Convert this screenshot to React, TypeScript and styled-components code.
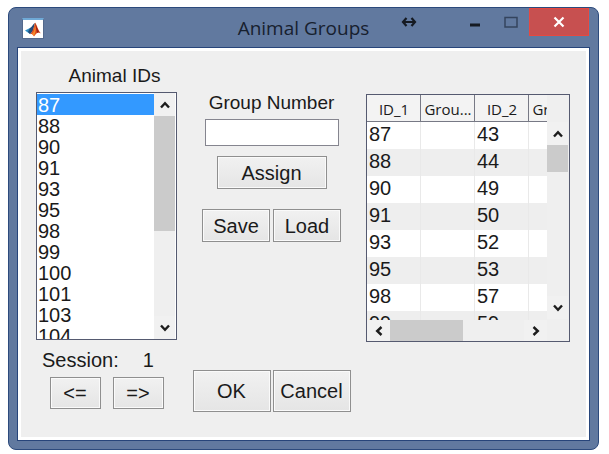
import React, { useRef, useState } from "react";
import styled, { createGlobalStyle } from "styled-components";

const listIds = [87, 88, 90, 91, 93, 95, 98, 99, 100, 101, 103, 104, 105, 107, 108, 110, 112, 113];
const rows = [[87, 43], [88, 44], [90, 49], [91, 50], [93, 52], [95, 53], [98, 57], [99, 59], [100, 60], [101, 62]];

const GlobalStyle = createGlobalStyle`
  * { box-sizing: border-box; }
  body { margin: 0; background: #fff; }
  body, button, input, select { font: 20px/24px "Liberation Sans", Arial, sans-serif; color: #1a1a1a; }
`;

const Page = styled.div`
  display: flex;
  min-height: 100vh;
  padding: 7px 10px 4px 8px;
`;

const Window = styled.main`
  flex: 1;
  min-width: 0;
  display: flex;
  flex-direction: column;
  padding: 0 9px 9px;
  background: #61799f;
  border: 1px solid #2c4a7c;
  border-radius: 8px;
  overflow: hidden;
`;

const TitleBar = styled.header`
  display: grid;
  grid-template-columns: 1fr auto 1fr;
  align-items: center;
  height: 40px;
`;

const Logo = styled.span`
  display: flex;
  width: 22px;
  height: 21px;
  margin-left: 4px;
  background: #fff;
  border: 1px solid #54698c;
  border-top: 2px solid #6fa9d6;
`;

const Title = styled.h1`
  margin: 0;
  font: 19px/24px "Open Sans", sans-serif;
  color: #17202e;
`;

const Controls = styled.div`
  display: flex;
  align-self: start;
  justify-content: flex-end;
`;

const ControlButton = styled.button<{ $close?: boolean }>`
  display: flex;
  align-items: center;
  justify-content: center;
  width: ${(p) => (p.$close ? 60 : 36)}px;
  height: 28px;
  padding: 0;
  border: ${(p) => (p.$close ? "1px solid #e8483f" : "0")};
  background: ${(p) => (p.$close ? "#c75050" : "transparent")};
`;

const ResizeMark = styled.span`
  display: flex;
  align-items: center;
  height: 28px;
  margin-right: 40px;
`;

const Panel = styled.form`
  flex: 1;
  display: grid;
  grid-template-columns: 141fr 157fr 204fr;
  column-gap: 16px;
  align-items: start;
  padding: 13px 16px 24px 15px;
  background: #efefef;
  border: 3px solid #fff;
  outline: 1px solid #27457a;
`;

const Column = styled.section<{ $top: number }>`
  min-width: 0;
  display: flex;
  flex-direction: column;
  align-items: center;
  padding-top: ${(p) => p.$top}px;
`;

const Label = styled.label<{ $indent?: number }>`
  font-size: 19px;
  white-space: nowrap;
  margin-bottom: 4px;
  padding-left: ${(p) => p.$indent ?? 0}px;
`;

const ListFrame = styled.div`
  display: flex;
  align-self: stretch;
  height: 248px;
  border: 1px solid #555a70;
  background: #fff;
  padding-right: 1px;
`;

const List = styled.select`
  flex: 1;
  min-width: 0;
  height: 100%;
  padding: 1px 0 0;
  border: 0;
  border-radius: 0;
  outline: 0;
  background: #fff;
  overflow-y: scroll;
  scrollbar-width: none;

  option {
    height: 21px;
    min-height: 21px;
    padding: 0 0 0 1px;
    font: 20px/21px "Liberation Sans", Arial, sans-serif;
    color: #1a1a1a;
  }
  option:checked {
    background: #3399ff linear-gradient(#3399ff, #3399ff);
    color: #fff;
  }
`;

const ScrollBar = styled.div<{ $horizontal?: boolean }>`
  flex: none;
  display: flex;
  flex-direction: ${(p) => (p.$horizontal ? "row" : "column")};
  ${(p) => (p.$horizontal ? "height: 21px;" : "width: 21px;")}
  background: #efefef;
`;

const ScrollButton = styled.button`
  flex: 0 0 23px;
  display: flex;
  align-items: center;
  justify-content: center;
  padding: 0;
  border: 0;
  background: #f1f1f1;
`;

const Track = styled.div<{ $horizontal?: boolean }>`
  flex: 1;
  display: flex;
  flex-direction: ${(p) => (p.$horizontal ? "row" : "column")};
`;

const Thumb = styled.div<{ $length: number }>`
  flex: 0 0 ${(p) => p.$length}px;
  background: #cbcbcb;
`;

const Button = styled.button<{ $width: number; $height: number }>`
  width: ${(p) => p.$width}px;
  height: ${(p) => p.$height}px;
  padding: 0;
  border: 1px solid #8f8f8f;
  box-shadow: inset 0 0 0 1px #fafafa;
  background: linear-gradient(#f1f1f1, #e5e5e5);
  white-space: nowrap;
`;

const ButtonRow = styled.div<{ $gap: number; $top: number }>`
  display: flex;
  gap: ${(p) => p.$gap}px;
  margin-top: ${(p) => p.$top}px;
`;

const Session = styled.div`
  display: flex;
  align-self: stretch;
  gap: 24px;
  margin-top: 8px;
  padding-left: 6px;
`;

const NumberInput = styled.input`
  width: 134px;
  height: 27px;
  padding: 0 4px;
  border: 1px solid #85858f;
  background: #fff;
`;

const TableFrame = styled.div`
  align-self: stretch;
  display: flex;
  height: 248px;
  border: 1px solid #555a70;
`;

const TableArea = styled.div`
  flex: 1;
  min-width: 0;
  display: flex;
  flex-direction: column;
`;

const TableClip = styled.div`
  flex: 1;
  min-height: 0;
  overflow: hidden;
`;

const SideBar = styled.div`
  display: flex;
  padding: 27px 1px 22px 0;
`;

const Table = styled.table`
  table-layout: fixed;
  width: 216px;
  border-collapse: separate;
  border-spacing: 0;

  th {
    width: 54px;
    height: 27px;
    padding: 1px 0 0 1px;
    border-right: 1px solid #777985;
    border-bottom: 1px solid #777985;
    background: #f3f3f3;
    font: 15px/20px "Open Sans", sans-serif;
  }
  td {
    height: 27px;
    padding: 0 0 4px 2px;
    line-height: 22px;
    border-right: 1px solid #e9e9e9;
    background: #fff;
  }
  tr:nth-child(even) td { background: #eeeeee; }
`;

const turns = { up: 0, right: 90, down: 180, left: 270 };

function Chevron({ to }: { to: keyof typeof turns }) {
  return (
    <svg width="12" height="12" viewBox="0 0 12 12" aria-hidden="true">
      <path d="M2 8.500 6 4.200 10 8.500" transform={`rotate(${turns[to]} 6 6)`} fill="none" stroke="#1d1d1d" strokeWidth="2.400" />
    </svg>
  );
}

type ScrollProps = { name: string; thumb: number; horizontal?: boolean; onStep: (amount: number) => void };

function Scroller({ name, thumb, horizontal, onStep }: ScrollProps) {
  return (
    <ScrollBar $horizontal={horizontal}>
      <ScrollButton type="button" aria-label={`${name} back`} onClick={() => onStep(-27)}>
        <Chevron to={horizontal ? "left" : "up"} />
      </ScrollButton>
      <Track $horizontal={horizontal}>
        <Thumb $length={thumb} />
      </Track>
      <ScrollButton type="button" aria-label={`${name} forward`} onClick={() => onStep(27)}>
        <Chevron to={horizontal ? "right" : "down"} />
      </ScrollButton>
    </ScrollBar>
  );
}

export default function App() {
  const list = useRef<HTMLSelectElement>(null);
  const table = useRef<HTMLDivElement>(null);
  const [session, setSession] = useState(1);
  const [group, setGroup] = useState("");

  return (
    <Page>
      <GlobalStyle />
      <Window>
        <TitleBar>
          <Logo>
            <svg width="20" height="18" viewBox="0 0 20 18" aria-hidden="true">
              <path d="M2 10.500 7 8l3 2.500L7 14z" fill="#2f8fc4" />
              <path d="M7 8c2-1 3-4 5-5l-2 8-3 3-2-2z" fill="#254b78" />
              <path d="M12 2.500c2 2 3 8 6 11-3-2-4-1-7 3-1-2-2-3-4-2 3-3 4-8 5-12z" fill="#df4e20" />
              <path d="M12 3c0 5-1 9-3 11l2 2c2-4 2-9 1-13z" fill="#f68a2a" />
              <path d="M12 3c2 4 3 8 5 10-1-1-2-1-3 0z" fill="#9c2118" />
            </svg>
          </Logo>
          <Title>Animal Groups</Title>
          <Controls>
            <ResizeMark>
              <svg width="16" height="12" viewBox="0 0 16 12" aria-hidden="true">
                <path d="M2 6h12M5.500 2 2 6l3.500 4M10.500 2 14 6l-3.500 4" fill="none" stroke="#151a22" strokeWidth="2.200" />
              </svg>
            </ResizeMark>
            <ControlButton aria-label="Minimize">
              <svg width="12" height="12" viewBox="0 0 12 12" aria-hidden="true">
                <path d="M1 9h10" stroke="#151a22" strokeWidth="3" />
              </svg>
            </ControlButton>
            <ControlButton aria-label="Maximize">
              <svg width="14" height="12" viewBox="0 0 14 12" aria-hidden="true">
                <path d="M1 1.500h12v9.500H1z" fill="none" stroke="#34445e" strokeWidth="1.500" />
              </svg>
            </ControlButton>
            <ControlButton $close aria-label="Close">
              <svg width="12" height="12" viewBox="0 0 12 12" aria-hidden="true">
                <path d="m1.500 1.500 9 9m0-9-9 9" stroke="#fff" strokeWidth="2.200" />
              </svg>
            </ControlButton>
          </Controls>
        </TitleBar>
        <Panel onSubmit={(e) => e.preventDefault()}>
          <Column $top={0}>
            <Label htmlFor="animal-ids" $indent={16}>Animal IDs</Label>
            <ListFrame>
              <List id="animal-ids" ref={list} size={11} defaultValue="87">
                {listIds.map((id) => (
                  <option key={id} value={id}>{id}</option>
                ))}
              </List>
              <Scroller name="Scroll list" thumb={115} onStep={(top) => list.current?.scrollBy({ top })} />
            </ListFrame>
            <Session>
              <span>Session:</span>
              <output>{session}</output>
            </Session>
            <ButtonRow $gap={12} $top={5}>
              <Button type="button" $width={51} $height={32} onClick={() => setSession(Math.max(1, session - 1))}>&lt;=</Button>
              <Button type="button" $width={51} $height={32} onClick={() => setSession(session + 1)}>=&gt;</Button>
            </ButtonRow>
          </Column>
          <Column $top={27}>
            <Label htmlFor="group-number">Group Number</Label>
            <NumberInput id="group-number" value={group} onChange={(e) => setGroup(e.target.value)} />
            <ButtonRow $gap={3} $top={10}>
              <Button type="button" $width={110} $height={33}>Assign</Button>
            </ButtonRow>
            <ButtonRow $gap={3} $top={20}>
              <Button type="button" $width={68} $height={33}>Save</Button>
              <Button type="button" $width={68} $height={33}>Load</Button>
            </ButtonRow>
            <ButtonRow $gap={2} $top={128}>
              <Button type="submit" $width={78} $height={42}>OK</Button>
              <Button type="button" $width={78} $height={42}>Cancel</Button>
            </ButtonRow>
          </Column>
          <Column $top={30}>
            <TableFrame>
              <TableArea>
                <TableClip ref={table}>
                  <Table>
                    <thead>
                      <tr><th>ID_1</th><th>Grou...</th><th>ID_2</th><th>Grou...</th></tr>
                    </thead>
                    <tbody>
                      {rows.map(([first, second]) => (
                        <tr key={first}><td>{first}</td><td /><td>{second}</td><td /></tr>
                      ))}
                    </tbody>
                  </Table>
                </TableClip>
                <Scroller name="Scroll columns" thumb={73} horizontal onStep={(left) => table.current?.scrollBy({ left })} />
              </TableArea>
              <SideBar>
                <Scroller name="Scroll rows" thumb={27} onStep={(top) => table.current?.scrollBy({ top })} />
              </SideBar>
            </TableFrame>
          </Column>
        </Panel>
      </Window>
    </Page>
  );
}
